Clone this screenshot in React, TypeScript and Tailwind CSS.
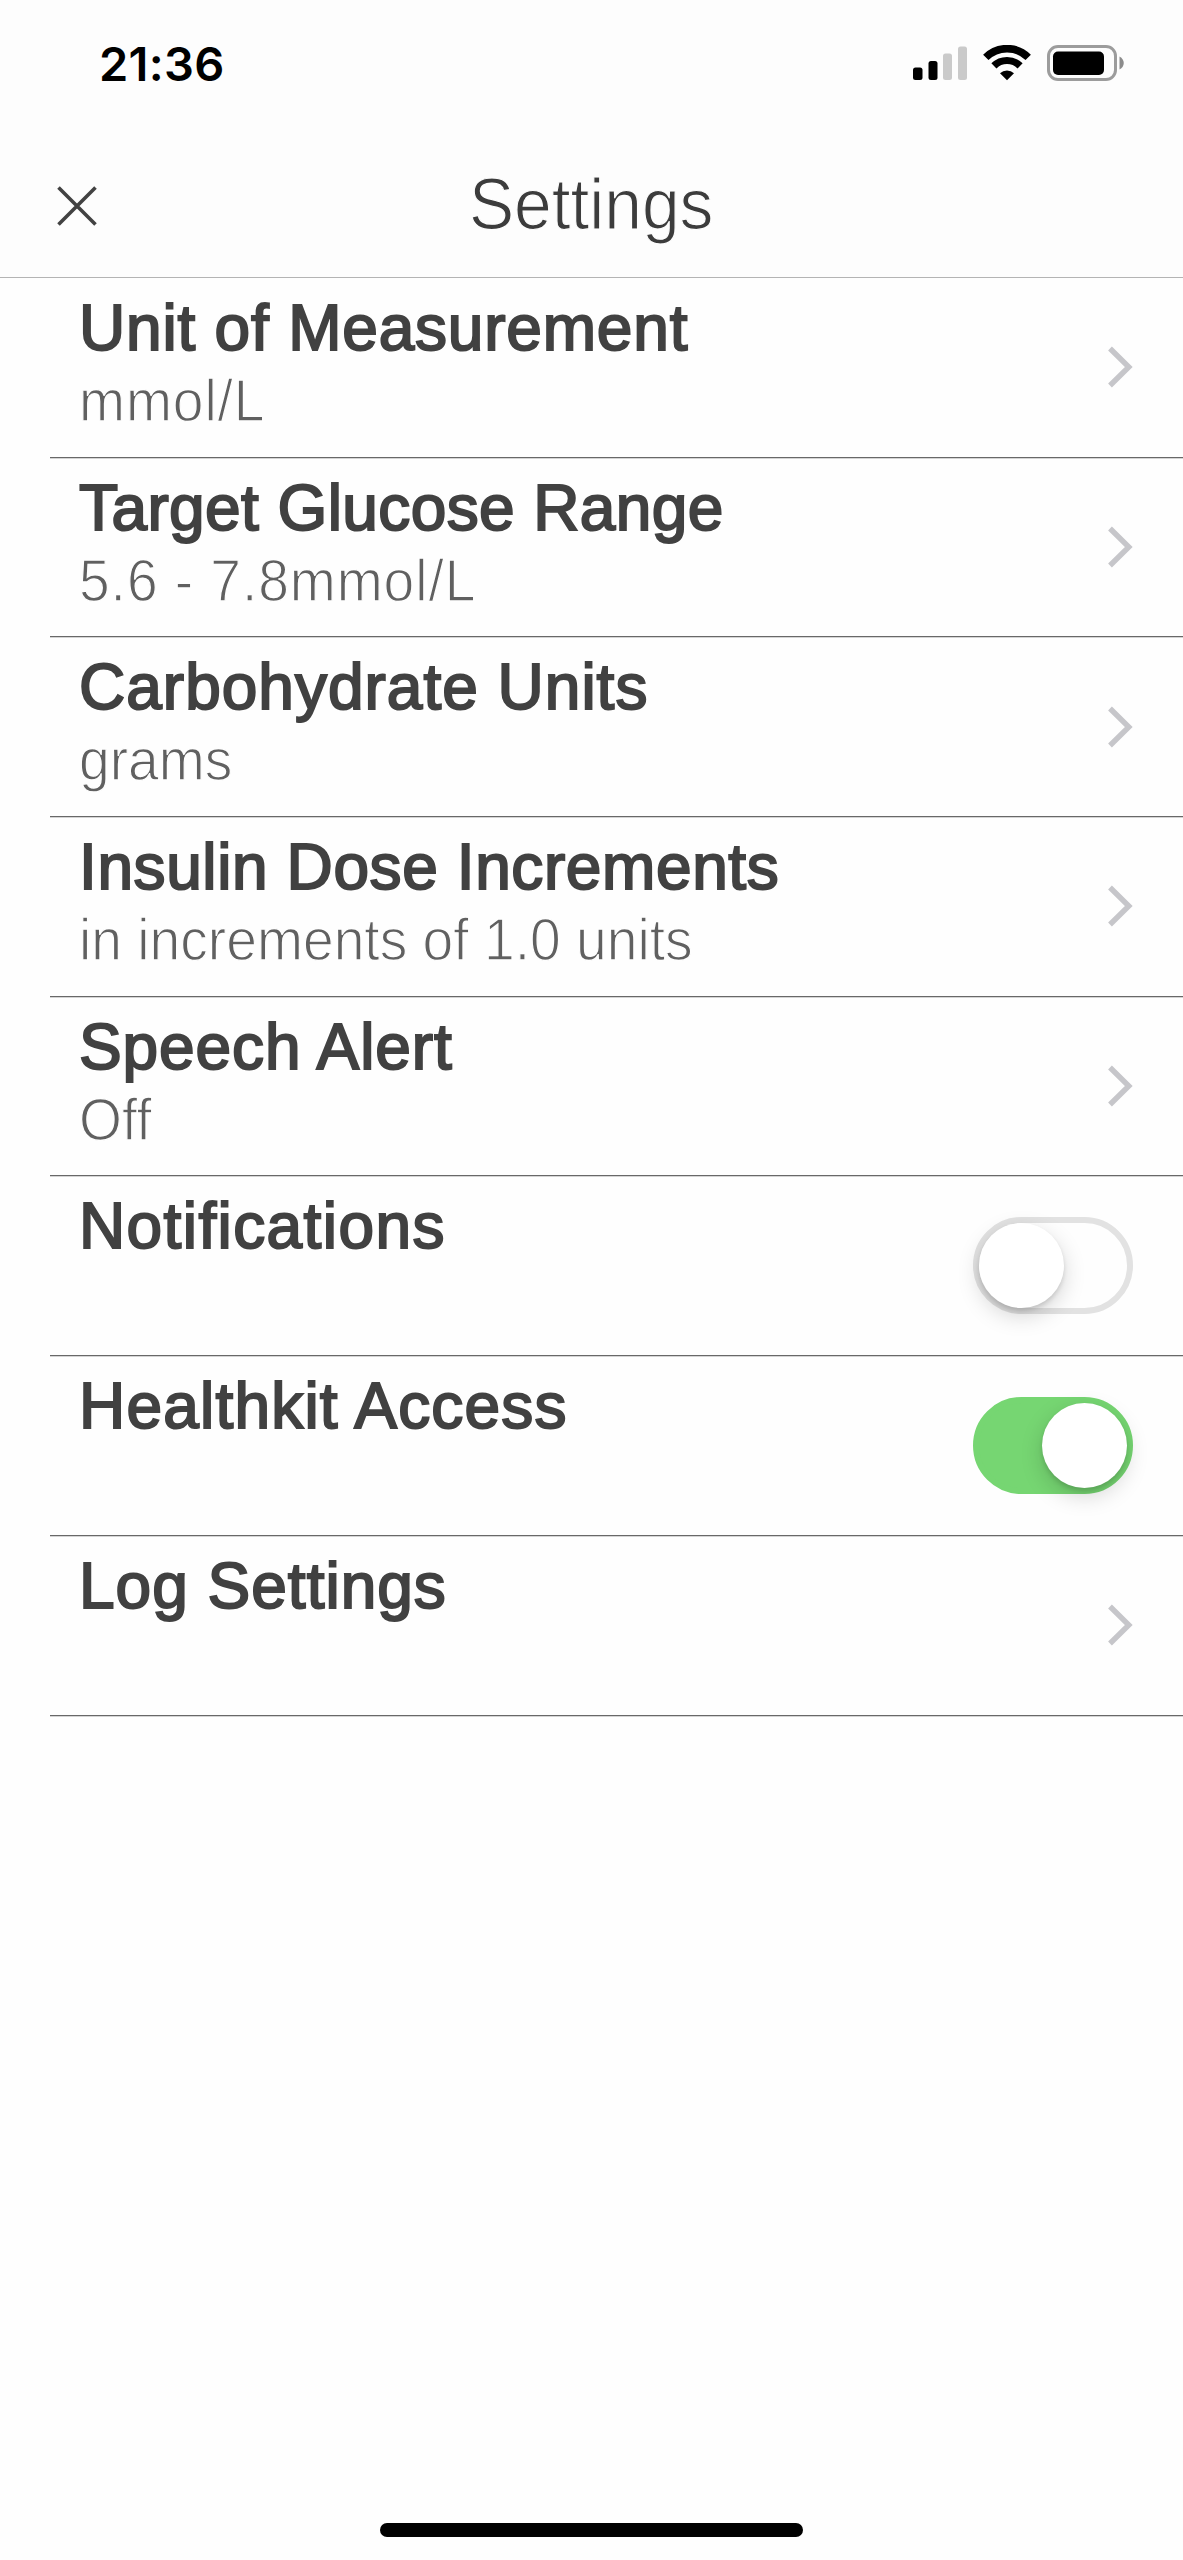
import { clsx } from 'clsx';

type Row = {
  title: string;
  titleSpacing: string;
  detail?: string;
  detailSpacing?: string;
  toggle?: 'on' | 'off';
};

const rows: Row[] = [
  { title: 'Unit of Measurement', titleSpacing: 'tracking-[0.8px]', detail: 'mmol/L', detailSpacing: 'tracking-[1px]' },
  { title: 'Target Glucose Range', titleSpacing: 'tracking-[0.4px]', detail: '5.6 - 7.8mmol/L', detailSpacing: 'tracking-[1px]' },
  { title: 'Carbohydrate Units', titleSpacing: 'tracking-[1px]', detail: 'grams' },
  { title: 'Insulin Dose Increments', titleSpacing: 'tracking-[0.6px]', detail: 'in increments of 1.0 units' },
  { title: 'Speech Alert', titleSpacing: 'tracking-[0.9px]', detail: 'Off' },
  { title: 'Notifications', titleSpacing: 'tracking-[1.4px]', toggle: 'off' },
  { title: 'Healthkit Access', titleSpacing: 'tracking-[1.2px]', toggle: 'on' },
  { title: 'Log Settings', titleSpacing: 'tracking-[1px]' },
];

function StatusBar() {
  return (
    <div className="flex h-[126px] items-center justify-between pl-[99px] pr-[58px]">
      <span className="font-['Inter',sans-serif] text-[47px] font-semibold leading-none tracking-[0.3px] text-black">21:36</span>
      <div className="flex items-center gap-4">
        <svg width="54" height="36" viewBox="0 0 54 36">
          <rect x="0" y="22.5" width="9.5" height="12.5" rx="2.5" fill="#000" />
          <rect x="15.5" y="16" width="9" height="19" rx="2.5" fill="#000" />
          <rect x="30" y="8.5" width="9" height="26.5" rx="2.5" fill="#cacaca" />
          <rect x="45" y="1.5" width="9" height="33.5" rx="2.5" fill="#cacaca" />
        </svg>
        <svg width="48" height="36" viewBox="0 0 48 36">
          <path d="M2.8 12.4a30 30 0 0 1 42.4 0" fill="none" stroke="#000" strokeWidth="7.6" />
          <path d="M10.9 20.9a18.6 18.6 0 0 1 26.2 0" fill="none" stroke="#000" strokeWidth="7.2" />
          <path d="M17 28.3a10 10 0 0 1 14 0l-7 7z" fill="#000" />
        </svg>
        <svg width="78" height="36" viewBox="0 0 78 36">
          <rect x="1.5" y="1.5" width="67" height="33" rx="9.5" fill="none" stroke="#9c9c9c" strokeWidth="3" />
          <rect x="6" y="6.5" width="51" height="23.5" rx="5" fill="#000" />
          <path d="M72.5 11.5c5.7 3 5.7 10 0 13z" fill="#8c8c8c" />
        </svg>
      </div>
    </div>
  );
}

function Toggle({ on }: { on: boolean }) {
  return (
    <button
      role="switch"
      aria-checked={on}
      className={clsx(
        'flex h-[97px] w-40 items-center rounded-full border-[6px]',
        on ? 'justify-end border-[#76d672] bg-[#76d672]' : 'justify-start border-[#e2e2e2]',
      )}
    >
      <span className="size-[85px] rounded-full bg-white shadow-[0_8px_22px_rgba(0,0,0,0.17),0_3px_4px_rgba(0,0,0,0.12)]" />
    </button>
  );
}

function Chevron() {
  return (
    <svg width="25" height="42" viewBox="0 0 25 42">
      <path d="M2 2.5L20.8 21L2 39.5" fill="none" stroke="#c6c6ca" strokeWidth="5.4" />
    </svg>
  );
}

export default function App() {
  return (
    <div className="flex h-[2560px] w-[1183px] flex-col overflow-hidden bg-[#fefefe] font-['Liberation_Sans',Arial,sans-serif]">
      <header className="h-[278px] border-b border-[#b4b4b4] bg-[#fdfdfd]">
        <StatusBar />
        <div className="grid h-[151px] grid-cols-3 items-center px-[57px] pt-1">
          <button aria-label="Close" className="pt-1">
            <svg width="40" height="40" viewBox="0 0 40 40">
              <path d="M1.5 1.5L38.5 38.5M38.5 1.5L1.5 38.5" stroke="#424242" strokeWidth="3.6" />
            </svg>
          </button>
          <h1 className="text-center text-[72px] leading-none text-[#3c3c3c] scale-x-94 [-webkit-text-stroke:1.2px_#fdfdfd]">Settings</h1>
        </div>
      </header>

      <main className="flex-1 pl-[50px]">
        {rows.map(row => (
          <section key={row.title} className="flex h-[179.7px] items-center justify-between border-b border-[#686868] pl-[29px] pr-[50px] shadow-[0_1px_0_#d4d4d4]">
            <div className="h-full whitespace-nowrap pt-[18px]">
              <h2 className={clsx('text-[64px] leading-[64px] text-[#414141] [-webkit-text-stroke:2px_#414141]', row.titleSpacing)}>{row.title}</h2>
              {row.detail && (
                <p className={clsx('origin-left scale-x-92 text-[60px] leading-[82px] text-[#606060] [-webkit-text-stroke:1.3px_#fefefe]', row.detailSpacing)}>
                  {row.detail}
                </p>
              )}
            </div>
            {row.toggle ? <Toggle on={row.toggle === 'on'} /> : <Chevron />}
          </section>
        ))}
      </main>

      <footer className="flex justify-center pb-[23px]">
        <div className="h-[14px] w-[423px] rounded-full bg-black" />
      </footer>
    </div>
  );
}
